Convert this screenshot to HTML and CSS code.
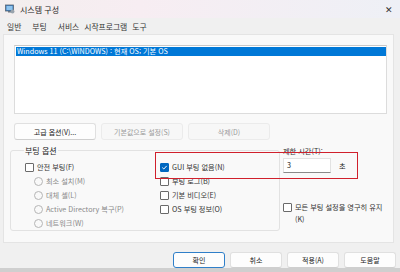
FILE: index.html
```html
<!DOCTYPE html>
<html lang="ko">

<head>
    <meta charset="UTF-8">
    <meta name="viewport" content="width=device-width, initial-scale=1.0">
    <title>시스템 구성</title>
    <link rel="stylesheet" href="styles.css">
</head>

<body>
    <div class="window">
        <div class="titlebar">
            <svg class="app-icon" width="10" height="10" viewBox="0 0 10 10">
                <rect x="0.5" y="1" width="8" height="6" fill="#3b7fc4" stroke="#5a6470" stroke-width="0.8"/>
                <rect x="1.5" y="2" width="6" height="4" fill="#8fc4ee"/>
                <rect x="3" y="7" width="3" height="1.5" fill="#6b7480"/>
                <circle cx="7.5" cy="7.5" r="2" fill="#9aa3ad"/>
            </svg>
            <span class="title">시스템 구성</span>
            <span class="close">✕</span>
        </div>

        <div class="tabs">
            <span class="tab">일반</span>
            <span class="tab active">부팅</span>
            <span class="tab">서비스</span>
            <span class="tab">시작프로그램</span>
            <span class="tab">도구</span>
        </div>

        <div class="panel">
            <div class="oslist">
                <div class="os-row">Windows 11 (C:\WINDOWS) : 현재 OS; 기본 OS</div>
            </div>

            <div class="list-buttons">
                <button class="btn">고급 옵션(V)...</button>
                <button class="btn" disabled>기본값으로 설정(S)</button>
                <button class="btn" disabled>삭제(D)</button>
            </div>

            <div class="options">
                <fieldset class="boot-group">
                    <legend>부팅 옵션</legend>
                    <div class="col col-left">
                        <label class="check"><span class="box"></span>안전 부팅(F)</label>
                        <label class="radio"><span class="dot"></span>최소 설치(M)</label>
                        <label class="radio"><span class="dot"></span>대체 셸(L)</label>
                        <label class="radio"><span class="dot"></span>Active Directory 복구(P)</label>
                        <label class="radio"><span class="dot"></span>네트워크(W)</label>
                    </div>
                    <div class="col col-mid">
                        <label class="check"><span class="box on"><svg width="7" height="7" viewBox="0 0 7 7"><path d="M1.3 3.6 L2.8 5 L5.7 1.9" fill="none" stroke="#fff" stroke-width="1"/></svg></span>GUI 부팅 없음(N)</label>
                        <label class="check"><span class="box"></span>부팅 로그(B)</label>
                        <label class="check"><span class="box"></span>기본 비디오(E)</label>
                        <label class="check"><span class="box"></span>OS 부팅 정보(O)</label>
                    </div>
                </fieldset>

                <div class="timeout">
                    <div class="timeout-label">제한 시간(T):</div>
                    <div class="timeout-row">
                        <span class="field">3</span>
                        <span class="unit">초</span>
                    </div>
                    <label class="check keep"><span class="box"></span>모든 부팅 설정을 영구히 유지<br>(K)</label>
                </div>

                <div class="highlight"></div>
            </div>
        </div>

        <div class="footer">
            <button class="btn dlg default">확인</button>
            <button class="btn dlg">취소</button>
            <button class="btn dlg">적용(A)</button>
            <button class="btn dlg">도움말</button>
        </div>
    </div>
</body>

</html>
```

FILE: styles.css
```css
body {
    margin: 0;
    background: #cfcfcf;
    font-family: "Noto Sans CJK KR", "Liberation Sans", sans-serif;
    font-size: 8px;
    color: #1a1a1a;
}

.window {
    width: 400px;
    height: 268px;
    background: #f0f0f0;
    display: flex;
    flex-direction: column;
}

.titlebar {
    height: 18px;
    flex-shrink: 0;
    display: flex;
    align-items: center;
    padding: 0 5px;
    background: linear-gradient(90deg, #f3eeee 0%, #f7edf2 35%, #eef0f6 100%);
}

.app-icon {
    margin-right: 5px;
}

.title {
    flex: 1;
    font-size: 8px;
    color: #222;
}

.close {
    font-size: 9px;
    color: #333;
    margin-right: 2px;
}

.tabs {
    height: 16px;
    flex-shrink: 0;
    display: flex;
    align-items: center;
    gap: 5px;
    padding: 2px 0 0 7px;
    box-sizing: border-box;
}

.tab {
    font-size: 7.8px;
    color: #333;
    line-height: 14px;
}

.tab.active {
    padding: 0 6px;
}

.panel {
    margin: 0 6px 0 3px;
    height: 209px;
    flex-shrink: 0;
    background: #f9f9f9;
    border: 1px solid #e4e4e4;
    box-sizing: border-box;
    padding: 10px 6px 0 10px;
}

.oslist {
    height: 69px;
    background: #fff;
    border: 1px solid #dcdcdc;
    border-top-color: #c8c8c8;
    box-sizing: border-box;
    padding: 1px 0 0 1px;
}

.os-row {
    background: #0078d7;
    color: #fff;
    height: 9px;
    line-height: 9px;
    font-size: 7.2px;
    padding-left: 1px;
}

.list-buttons {
    display: flex;
    gap: 5px;
    margin-top: 9px;
}

.btn {
    width: 82px;
    height: 17px;
    font-family: inherit;
    font-size: 7px;
    color: #222;
    background: #fdfdfd;
    border: 1px solid #e0e0e0;
    border-bottom-color: #cfcfcf;
    border-radius: 3px;
    padding: 0;
}

.btn:disabled {
    color: #9a9a9a;
    background: #f7f7f7;
    border-color: #ebebeb;
}

.options {
    position: relative;
    display: flex;
    margin-top: 5px;
}

.boot-group {
    width: 270px;
    height: 86px;
    margin: 0 0 0 -4px;
    padding: 0 0 0 14px;
    border: 1px solid #e2e2e2;
    border-radius: 3px;
    display: flex;
    box-sizing: border-box;
}

.boot-group legend {
    font-size: 8px;
    padding: 0 1px;
    margin-left: -1px;
    color: #222;
}

.col {
    display: flex;
    flex-direction: column;
}

.col-left {
    width: 135px;
    padding-top: 4px;
}

.col-mid {
    padding-top: 4px;
}

.check,
.radio {
    display: flex;
    align-items: center;
    height: 14px;
    font-size: 7.2px;
    color: #333;
}

.radio {
    color: #8a8a8a;
    padding-left: 9px;
}

.box {
    width: 7px;
    height: 7px;
    flex-shrink: 0;
    border: 1px solid #6a6a6a;
    border-radius: 1px;
    margin-right: 3px;
    display: flex;
    align-items: center;
    justify-content: center;
    background: #fff;
}

.box.on {
    background: #0067c0;
    border-color: #0067c0;
}

.dot {
    width: 7px;
    height: 7px;
    border: 1px solid #b5b5b5;
    border-radius: 50%;
    margin-right: 3px;
}

.timeout {
    margin-left: 3px;
    margin-top: 1px;
}

.timeout-label {
    font-size: 7.2px;
    color: #333;
    height: 10px;
    line-height: 10px;
}

.timeout-row {
    display: flex;
    align-items: center;
    margin-top: 2px;
}

.field {
    width: 48px;
    height: 15px;
    background: #fff;
    border: 1px solid #e2e2e2;
    border-bottom-color: #8a8a8a;
    box-sizing: border-box;
    padding-left: 3px;
    line-height: 13px;
    font-size: 7.2px;
}

.unit {
    margin-left: 8px;
    font-size: 7.2px;
}

.keep {
    margin-top: 28px;
    height: auto;
    align-items: flex-start;
    line-height: 12px;
}

.keep .box {
    margin-top: 2px;
}

.highlight {
    position: absolute;
    left: 141px;
    top: 7px;
    width: 203px;
    height: 27px;
    border: 1px solid #d0202c;
    box-sizing: border-box;
    pointer-events: none;
}

.footer {
    display: flex;
    justify-content: flex-end;
    gap: 5px;
    padding: 9px 4px 0 0;
}

.btn.dlg {
    width: 52px;
    height: 16px;
}

.btn.default {
    border: 1px solid #2f7fc9;
}
```
